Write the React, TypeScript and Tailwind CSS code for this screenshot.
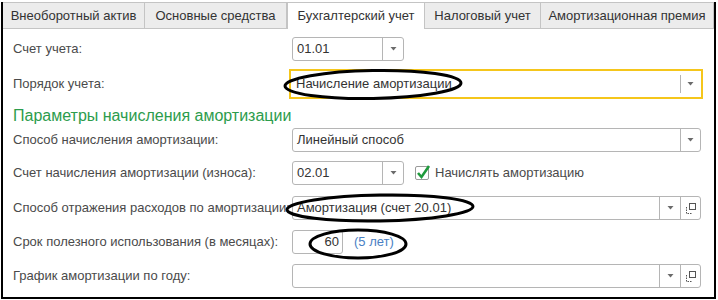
import React from "react";

const tabs = [
  { title: "Внеоборотный актив", w: "w-[142px]" },
  { title: "Основные средства", w: "w-[142px]" },
  { title: "Бухгалтерский учет", w: "w-[138px]", active: true },
  { title: "Налоговый учет", w: "w-[116px]" },
  { title: "Амортизационная премия", w: "w-[173px]" },
];

const Arrow = () => (
  <svg width="7" height="4" viewBox="0 0 7 4">
    <path d="M0.5 0h6L3.5 3.5z" fill="#6b6b6b" />
  </svg>
);

const OpenIcon = () => (
  <svg width="11" height="11" viewBox="0 0 11 11" fill="none">
    <rect x="4.5" y="0.5" width="6" height="6" stroke="#555" />
    <path d="M1.5 4v6.5H7" stroke="#555" strokeDasharray="1.5 1" />
  </svg>
);

const DropBtn = ({ w = "w-[21px]" }: { w?: string }) => (
  <div className={`${w} h-full border-l border-[#b5b5b5] flex items-center justify-center`}>
    <Arrow />
  </div>
);

const Label = ({ children }: { children: React.ReactNode }) => (
  <div className="w-[279px] shrink-0 text-[13px] text-[#4a4a4a] whitespace-nowrap">{children}</div>
);

export default function App() {
  return (
    <div
      className="w-[718px] h-[300px] bg-white pt-[2px] pl-[1px]"
      style={{ fontFamily: '"Liberation Sans", Arial, sans-serif' }}
    >
      <div className="relative w-[715px] h-[297px] border-x-2 border-b-2 border-black">
        {/* Tabs */}
        <div className="flex h-[27px]">
          {tabs.map((t) => (
            <div
              key={t.title}
              className={`${t.w} h-full flex items-center justify-center text-[13px] text-[#333] border-t border-r border-[#c4c4c4] ${
                t.active ? "bg-white border-l" : "bg-[#ececec] border-b"
              }`}
            >
              {t.title}
            </div>
          ))}
        </div>

        <div className="pl-[10px] pt-[8px]">
          {/* Счет учета */}
          <div className="flex items-center h-[24px]">
            <Label>Счет учета:</Label>
            <div className="w-[112px] h-[24px] border border-[#b5b5b5] rounded-[3px] flex items-center bg-white">
              <span className="flex-1 pl-[4px] text-[13px] text-[#333]">01.01</span>
              <DropBtn />
            </div>
          </div>

          {/* Порядок учета */}
          <div className="flex items-center h-[30px] mt-[8px]">
            <div className="w-[276px] shrink-0 text-[13px] text-[#4a4a4a]">Порядок учета:</div>
            <div className="w-[414px] h-[30px] border-2 border-[#f5c61b] p-[1px]">
              <div className="h-full flex items-center bg-white">
                <span className="flex-1 pl-[4px] text-[13px] text-[#333]">Начисление амортизации</span>
                <div className="w-[20px] h-[18px] border-l border-[#b5b5b5] flex items-center justify-center">
                  <Arrow />
                </div>
              </div>
            </div>
          </div>

          <div className="h-[29px] pt-[4px] flex items-center text-[16px] text-[#2c9c4c]">
            Параметры начисления амортизации
          </div>

          {/* Способ начисления */}
          <div className="flex items-center h-[24px]">
            <Label>Способ начисления амортизации:</Label>
            <div className="w-[409px] h-[24px] border border-[#b5b5b5] rounded-[3px] flex items-center">
              <span className="flex-1 pl-[4px] text-[13px] text-[#333]">Линейный способ</span>
              <DropBtn w="w-[20px]" />
            </div>
          </div>

          {/* Счет начисления */}
          <div className="flex items-center h-[24px] mt-[9px]">
            <Label>Счет начисления амортизации (износа):</Label>
            <div className="w-[112px] h-[24px] border border-[#b5b5b5] rounded-[3px] flex items-center">
              <span className="flex-1 pl-[4px] text-[13px] text-[#333]">02.01</span>
              <DropBtn />
            </div>
            <div className="ml-[11px] w-[14px] h-[14px] border border-[#9a9a9a] rounded-[2px] relative bg-white">
              <svg className="absolute -top-[3px] left-[0px]" width="15" height="16" viewBox="0 0 15 16">
                <path d="M2 9l3.5 4L13 2" stroke="#1f9a3c" strokeWidth="2.6" fill="none" />
              </svg>
            </div>
            <span className="ml-[6px] text-[13px] text-[#4a4a4a]">Начислять амортизацию</span>
          </div>

          {/* Способ отражения */}
          <div className="flex items-center h-[24px] mt-[11px]">
            <Label>Способ отражения расходов по амортизации:</Label>
            <div className="w-[409px] h-[24px] border border-[#b5b5b5] rounded-[3px] flex items-center">
              <span className="flex-1 pl-[4px] text-[13px] text-[#333]">Амортизация (счет 20.01)</span>
              <DropBtn />
              <div className="w-[20px] h-full border-l border-[#b5b5b5] flex items-center justify-center">
                <OpenIcon />
              </div>
            </div>
          </div>

          {/* Срок */}
          <div className="flex items-center h-[24px] mt-[10px]">
            <Label>Срок полезного использования (в месяцах):</Label>
            <div className="w-[51px] h-[24px] border border-[#b5b5b5] rounded-[3px] flex items-center justify-end pr-[3px] text-[13px] text-[#333]">
              60
            </div>
            <span className="ml-[11px] text-[13px] text-[#4a7fc4]">(5 лет)</span>
          </div>

          {/* График */}
          <div className="flex items-center h-[24px] mt-[10px]">
            <Label>График амортизации по году:</Label>
            <div className="w-[409px] h-[24px] border border-[#b5b5b5] rounded-[3px] flex items-center">
              <span className="flex-1" />
              <DropBtn />
              <div className="w-[20px] h-full border-l border-[#b5b5b5] flex items-center justify-center">
                <OpenIcon />
              </div>
            </div>
          </div>
        </div>

        {/* Hand-drawn highlight ellipses */}
        <svg className="absolute -left-[3px] -top-[2px] pointer-events-none" width="718" height="300">
          <ellipse cx="373" cy="84.5" rx="88" ry="14" fill="none" stroke="#000" strokeWidth="3" transform="rotate(-1 373 84.5)" />
          <ellipse cx="380" cy="208" rx="93" ry="13" fill="none" stroke="#000" strokeWidth="3" transform="rotate(-1 380 208)" />
          <ellipse cx="358" cy="244" rx="48" ry="14" fill="none" stroke="#000" strokeWidth="3" />
        </svg>
      </div>
    </div>
  );
}
